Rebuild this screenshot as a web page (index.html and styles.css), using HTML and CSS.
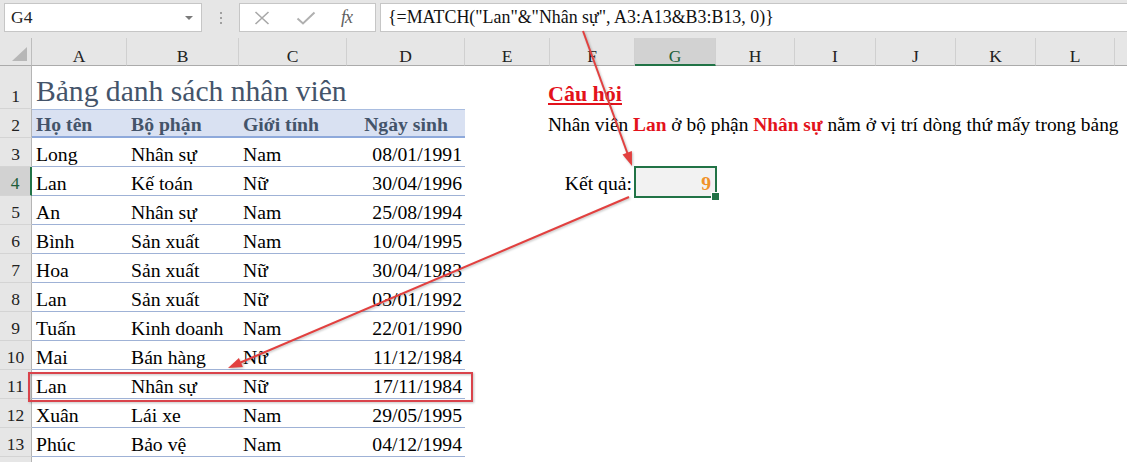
FILE: index.html
```html
<!DOCTYPE html>
<html lang="vi">
<head>
<meta charset="utf-8">
<title>MATCH nhiều điều kiện</title>
<link rel="stylesheet" href="styles.css">
</head>
<body>
<div class="app">
  <div class="fbar">
    <div class="namebox"><span>G4</span><span class="dd"></span></div>
    <div class="grip"><i></i><i></i><i></i></div>
    <div class="fbtns">
      <svg class="ico-x" width="16" height="14" viewBox="0 0 16 14"><path d="M1.5 1 L14.5 13 M14.5 1 L1.5 13" stroke="#a8a8a8" stroke-width="1.6" fill="none"/></svg>
      <svg class="ico-ok" width="20" height="14" viewBox="0 0 20 14"><path d="M1.5 7.5 L7 12.5 L18.5 1.5" stroke="#b0b0b0" stroke-width="2" fill="none"/></svg>
      <span class="fx">fx</span>
    </div>
    <div class="finput">{=MATCH("Lan"&amp;"Nhân sự", A3:A13&amp;B3:B13, 0)}</div>
  </div>

  <div class="sheet">
    <!-- column headers -->
    <div class="corner"><svg width="16" height="15" viewBox="0 0 16 15"><polygon points="15,0 15,14 0,14" fill="#b7b7b7"/></svg></div>
    <div class="ch">A</div><div class="ch">B</div><div class="ch">C</div><div class="ch">D</div>
    <div class="ch">E</div><div class="ch">F</div><div class="ch sel">G</div><div class="ch">H</div>
    <div class="ch">I</div><div class="ch">J</div><div class="ch">K</div><div class="ch">L</div>
    <div class="ch last"></div>

    <!-- row 1 -->
    <div class="rh">1</div>
    <div class="c title">Bảng danh sách nhân viên</div>
    <div class="c s4"></div>
    <div class="c q-title">Câu hỏi</div>
    <div class="c s7"></div>

    <!-- row 2 -->
    <div class="rh">2</div>
    <div class="c th">Họ tên</div>
    <div class="c th">Bộ phận</div>
    <div class="c th">Giới tính</div>
    <div class="c th center">Ngày sinh</div>
    <div class="c"></div>
    <div class="c q-text"><span>Nhân viên <b>Lan</b> ở bộ phận <b>Nhân sự</b> nằm ở vị trí dòng thứ mấy trong bảng</span></div>
    <div class="c s7"></div>

    <!-- row 3 -->
    <div class="rh">3</div>
    <div class="c t">Long</div><div class="c t">Nhân sự</div><div class="c t">Nam</div><div class="c t r">08/01/1991</div>
    <div class="c s9"></div>

    <!-- row 4 -->
    <div class="rh sel">4</div>
    <div class="c t">Lan</div><div class="c t">Kế toán</div><div class="c t">Nữ</div><div class="c t r">30/04/1996</div>
    <div class="c"></div>
    <div class="c r lbl">Kết quả:</div>
    <div class="c r active"><span class="res">9</span></div>
    <div class="c s6"></div>

    <!-- row 5 -->
    <div class="rh">5</div>
    <div class="c t">An</div><div class="c t">Nhân sự</div><div class="c t">Nam</div><div class="c t r">25/08/1994</div>
    <div class="c s9"></div>

    <!-- row 6 -->
    <div class="rh">6</div>
    <div class="c t">Bình</div><div class="c t">Sản xuất</div><div class="c t">Nam</div><div class="c t r">10/04/1995</div>
    <div class="c s9"></div>

    <!-- row 7 -->
    <div class="rh">7</div>
    <div class="c t">Hoa</div><div class="c t">Sản xuất</div><div class="c t">Nữ</div><div class="c t r">30/04/1983</div>
    <div class="c s9"></div>

    <!-- row 8 -->
    <div class="rh">8</div>
    <div class="c t">Lan</div><div class="c t">Sản xuất</div><div class="c t">Nữ</div><div class="c t r">03/01/1992</div>
    <div class="c s9"></div>

    <!-- row 9 -->
    <div class="rh">9</div>
    <div class="c t">Tuấn</div><div class="c t">Kinh doanh</div><div class="c t">Nam</div><div class="c t r">22/01/1990</div>
    <div class="c s9"></div>

    <!-- row 10 -->
    <div class="rh">10</div>
    <div class="c t">Mai</div><div class="c t">Bán hàng</div><div class="c t">Nữ</div><div class="c t r">11/12/1984</div>
    <div class="c s9"></div>

    <!-- row 11 -->
    <div class="rh">11</div>
    <div class="c t">Lan</div><div class="c t">Nhân sự</div><div class="c t">Nữ</div><div class="c t r">17/11/1984</div>
    <div class="c s9"></div>

    <!-- row 12 -->
    <div class="rh">12</div>
    <div class="c t">Xuân</div><div class="c t">Lái xe</div><div class="c t">Nam</div><div class="c t r">29/05/1995</div>
    <div class="c s9"></div>

    <!-- row 13 -->
    <div class="rh">13</div>
    <div class="c t">Phúc</div><div class="c t">Bảo vệ</div><div class="c t">Nam</div><div class="c t r">04/12/1994</div>
    <div class="c s9"></div>

    <!-- row 14 -->
    <div class="rh"></div>
    <div class="c s13"></div>
  </div>

  <svg class="annot" width="1127" height="462" viewBox="0 0 1127 462">
    <g class="marks">
      <rect x="29" y="373" width="443" height="28" fill="none" stroke="#d9434b" stroke-width="2"/>
      <line x1="583" y1="31" x2="627.5" y2="153.5" stroke="#e2403f" stroke-width="2"/>
      <polygon points="632,166 622.5,154.5 631.9,151.1" fill="#e2403f"/>
      <line x1="629" y1="197" x2="240.5" y2="362.5" stroke="#e2403f" stroke-width="2"/>
      <polygon points="228,368 238.9,357.9 242.9,367.1" fill="#e2403f"/>
    </g>
  </svg>
</div>
</body>
</html>
```

FILE: styles.css
```css
* { box-sizing: border-box; margin: 0; padding: 0; }

html, body {
  width: 1127px;
  height: 462px;
  overflow: hidden;
  background: #ffffff;
}

body {
  font-family: "Liberation Serif", "Times New Roman", serif;
  color: #000;
}

.app {
  position: relative;
  width: 1127px;
  height: 462px;
  overflow: hidden;
  background: #ffffff;
}

/* ---------- formula bar ---------- */
.fbar {
  height: 38px;
  background: #e6e6e6;
  display: flex;
  align-items: flex-start;
  padding: 3px 0 0 4px;
}

.namebox {
  width: 198px;
  height: 29px;
  background: #fff;
  border: 1px solid #c6c6c6;
  display: flex;
  align-items: center;
  justify-content: space-between;
  padding: 0 8px 0 6px;
  font-family: "Liberation Serif", serif;
  font-size: 17.5px;
  color: #222;
}

.dd {
  width: 0;
  height: 0;
  border-left: 4px solid transparent;
  border-right: 4px solid transparent;
  border-top: 4px solid #7a7a7a;
}

.grip {
  width: 37px;
  height: 29px;
  display: flex;
  flex-direction: column;
  align-items: center;
  gap: 3px;
  padding-top: 9px;
}

.grip i {
  display: block;
  width: 2px;
  height: 2px;
  background: #a0a0a0;
}

.fbtns {
  width: 137px;
  height: 29px;
  background: #fff;
  border: 1px solid #c6c6c6;
  display: flex;
  align-items: center;
  padding-left: 14px;
}

.ico-x { margin-right: 26px; }
.ico-ok { margin-right: 25px; }

.fx {
  font-style: italic;
  font-size: 18px;
  color: #606060;
  letter-spacing: -1px;
}

.finput {
  flex: 1;
  height: 29px;
  margin-left: 4px;
  background: #fff;
  border: 1px solid #c6c6c6;
  border-right: none;
  padding-left: 7px;
  font-size: 17.9px;
  line-height: 27px;
  white-space: nowrap;
  color: #111;
}

/* ---------- sheet grid ---------- */
.sheet {
  display: grid;
  grid-template-columns: 32px 95px 112px 108px 118px 85px 85px 81px 79px 81px 80px 80px 79px 1fr;
  grid-template-rows: 28px 43px repeat(13, 29px);
}

.corner {
  background: #e6e6e6;
  border-right: 1px solid #bdbdbd;
  border-bottom: 1px solid #ababab;
  display: flex;
  align-items: flex-end;
  justify-content: flex-end;
  padding: 0 3px 3px 0;
}

.ch {
  background: #e6e6e6;
  border-bottom: 1px solid #ababab;
  border-right: 1px solid #d0d0d0;
  font-family: "Liberation Serif", serif;
  font-size: 17.5px;
  line-height: 28px;
  padding-top: 4px;
  text-align: center;
  color: #222;
}

.ch.sel {
  background: #d2d2d2;
  border-bottom: 2px solid #217346;
  color: #1e5e3a;
}

.ch.last { border-right: none; }

.rh {
  background: #e6e6e6;
  border-right: 1px solid #b5b5b5;
  border-bottom: 1px solid #d4d4d4;
  font-family: "Liberation Serif", serif;
  font-size: 17.5px;
  line-height: 20px;
  padding-bottom: 2px;
  display: flex;
  align-items: flex-end;
  justify-content: center;
  color: #222;
}

.rh.sel {
  background: #d2d2d2;
  border-right: 2px solid #217346;
  color: #1e5e3a;
}

.c {
  position: relative;
  display: flex;
  align-items: flex-end;
  white-space: nowrap;
  overflow: visible;
  font-size: 19.7px;
  line-height: 22px;
  padding: 0 3px 2px 4px;
}

.s4 { grid-column: span 4; }
.s6 { grid-column: span 6; }
.s7 { grid-column: span 7; }
.s9 { grid-column: span 9; }
.s13 { grid-column: span 13; }

.r { justify-content: flex-end; }
.center { justify-content: center; }

.title {
  font-size: 29.6px;
  line-height: 34px;
  color: #44546a;
  padding-bottom: 1px;
}

.th {
  background: #d9e1f2;
  border-top: 1px solid #a9bde0;
  border-bottom: 2px solid #8ea9db;
  font-weight: bold;
  color: #44546a;
  padding-bottom: 1px;
  padding-left: 4px;
}

.th.center { padding-left: 0; padding-right: 0; }

.t {
  border-bottom: 1px solid #9fb2d6;
  padding-bottom: 1px;
}

.q-title {
  font-size: 22px;
  line-height: 26px;
  font-weight: bold;
  color: #e3121b;
  text-decoration: underline;
  text-underline-offset: 2px;
  padding-left: 0;
  margin-left: -2px;
  padding-bottom: 2px;
}

.q-text {
  font-size: 19.4px;
  padding-left: 0;
  margin-left: -2px;
}

.q-text b { color: #e3121b; }

.lbl { padding-right: 3px; }

.active {
  background: #f2f2f2;
  padding-right: 5px;
}

.active::after {
  content: "";
  position: absolute;
  left: -1px;
  top: -1px;
  right: -1px;
  bottom: -2px;
  border: 2px solid #217346;
}

.active::before {
  content: "";
  position: absolute;
  right: -4px;
  bottom: -5px;
  width: 7px;
  height: 7px;
  background: #217346;
  border: 1px solid #fff;
  z-index: 2;
}

.res {
  font-weight: bold;
  color: #f0922a;
}

/* ---------- annotations ---------- */
.annot {
  position: absolute;
  left: 0;
  top: 0;
  pointer-events: none;
}

.marks {
  filter: drop-shadow(1px 1px 1px rgba(0, 0, 0, 0.25));
}
```
